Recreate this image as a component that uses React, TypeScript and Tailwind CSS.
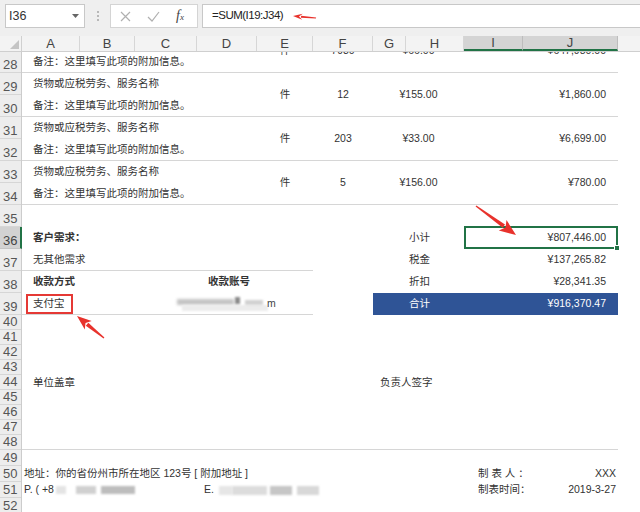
import { ReactNode } from 'react'

const headerCols = [
  { label: 'A', w: 'w-[58px]', sel: false },
  { label: 'B', w: 'w-[55px]', sel: false },
  { label: 'C', w: 'w-[62px]', sel: false },
  { label: 'D', w: 'w-[60px]', sel: false },
  { label: 'E', w: 'w-[56px]', sel: false },
  { label: 'F', w: 'w-[60px]', sel: false },
  { label: 'G', w: 'w-[33px]', sel: false },
  { label: 'H', w: 'w-[58px]', sel: false },
  { label: 'I', w: 'w-[59px]', sel: true },
  { label: 'J', w: 'w-[95px]', sel: true },
]

const rowNums = Array.from({ length: 26 }, (_, i) => 27 + i)

const rowHeight = (n: number) => (n <= 39 ? 'h-[22px]' : n <= 48 ? 'h-[15px]' : 'h-[16px]')

// row 27 sits under the column headings, only the bottom of its numbers shows
const items = [
  { span: 'row-[1/span_2]', top: '', bottom: 'row-start-2', qty: '7930', price: '¥66.00', total: '¥647,980.00' },
  { span: 'row-[3/span_2]', top: 'row-start-3', bottom: 'row-start-4', qty: '12', price: '¥155.00', total: '¥1,860.00' },
  { span: 'row-[5/span_2]', top: 'row-start-5', bottom: 'row-start-6', qty: '203', price: '¥33.00', total: '¥6,699.00' },
  { span: 'row-[7/span_2]', top: 'row-start-7', bottom: 'row-start-8', qty: '5', price: '¥156.00', total: '¥780.00' },
]

function Cell({ className, children }: { className: string; children?: ReactNode }) {
  return <div className={`flex items-center whitespace-nowrap text-[10.5px] text-[#333] ${className}`}>{children}</div>
}

// red callout arrow, drawn from tail (x1,y1) to head (x2,y2)
function Arrow({ x1, y1, x2, y2, w, hl, hw }: { x1: number; y1: number; x2: number; y2: number; w: number; hl: number; hw: number }) {
  const len = Math.hypot(x2 - x1, y2 - y1)
  const ux = (x2 - x1) / len
  const uy = (y2 - y1) / len
  const px = -uy
  const py = ux
  const bx = x2 - ux * hl
  const by = y2 - uy * hl
  const pt = (x: number, y: number) => `${x.toFixed(1)},${y.toFixed(1)}`
  const shaft = [
    pt(x1 + px * 0.6, y1 + py * 0.6),
    pt(bx + (px * w) / 2, by + (py * w) / 2),
    pt(bx - (px * w) / 2, by - (py * w) / 2),
    pt(x1 - px * 0.6, y1 - py * 0.6),
  ].join(' ')
  const head = [
    pt(x2, y2),
    pt(bx + (px * hw) / 2 - ux * 1.5, by + (py * hw) / 2 - uy * 1.5),
    pt(bx + ux * 2, by + uy * 2),
    pt(bx - (px * hw) / 2 - ux * 1.5, by - (py * hw) / 2 - uy * 1.5),
  ].join(' ')
  return (
    <g fill="#e8322c">
      <polygon points={shaft} />
      <polygon points={head} />
    </g>
  )
}

export default function App() {
  return (
    <div className="relative w-[640px] h-[512px] overflow-hidden bg-white font-['Liberation_Sans','Noto_Sans_CJK_SC',sans-serif]">
      {/* formula bar */}
      <div className="h-[36px] bg-[#efefef] flex items-start pt-[4px] pl-[5px]">
        <div className="w-[80px] h-[24px] bg-white border border-[#c8c8c8] flex items-center justify-between pl-[3px] pr-[5px]">
          <span className="text-[12.5px] text-[#333]">I36</span>
          <svg width="7" height="4" viewBox="0 0 7 4">
            <path d="M0 0h7L3.5 4z" fill="#666" />
          </svg>
        </div>
        <div className="w-[25px] h-[24px] flex flex-col items-center justify-center gap-[2px]">
          <span className="w-[2px] h-[2px] bg-[#b8b8b8]" />
          <span className="w-[2px] h-[2px] bg-[#b8b8b8]" />
          <span className="w-[2px] h-[2px] bg-[#b8b8b8]" />
        </div>
        <div className="w-[88px] h-[24px] bg-white border border-[#d4d4d4] flex items-center pl-[9px] gap-[16px]">
          <svg width="11" height="11" viewBox="0 0 11 11">
            <path d="M1 1l9 9M10 1l-9 9" stroke="#b0b0b0" strokeWidth="1.2" />
          </svg>
          <svg width="13" height="11" viewBox="0 0 13 11">
            <path d="M1 6l4 4 7-9" stroke="#b0b0b0" strokeWidth="1.2" fill="none" />
          </svg>
          <span className="font-['Liberation_Serif',serif] italic text-[14px] text-[#444] leading-none">
            f<span className="text-[9px]">x</span>
          </span>
        </div>
        <div className="ml-[4px] flex-1 h-[24px] bg-white border border-r-0 border-[#c8c8c8] flex items-center pl-[9px]">
          <span className="text-[11.5px] tracking-[-0.5px] text-[#222]">=SUM(I19:J34)</span>
        </div>
      </div>

      {/* column headings */}
      <div className="h-[16px] flex bg-[#f3f3f3] border-b border-[#cfcfcf]">
        <div className="w-[22px] shrink-0 border-r border-[#d0d0d0] flex items-end justify-end pr-[2px] pb-[2px]">
          <svg width="9" height="9" viewBox="0 0 9 9">
            <path d="M9 0v9H0z" fill="#c4c4c4" />
          </svg>
        </div>
        {headerCols.map((c) => (
          <div
            key={c.label}
            className={`${c.w} shrink-0 flex items-center justify-center text-[13px] leading-none border-r ${
              c.sel ? 'bg-[#d4d4d4] text-[#444] border-[#bdbdbd] border-b-2 border-b-[#217346]' : 'text-[#444] border-[#d6d6d6]'
            }`}
          >
            {c.label}
          </div>
        ))}
        <div className="flex-1" />
      </div>

      {/* sheet */}
      <div className="h-[460px] overflow-hidden">
        <div className="flex -mt-[23px]">
          <div className="w-[22px] shrink-0 flex flex-col bg-[#ededed] border-r border-[#cccccc]">
            {rowNums.map((n) => (
              <div
                key={n}
                className={`${rowHeight(n)} shrink-0 flex items-end pl-[3px] pb-[1px] text-[13px] leading-none font-['Liberation_Sans_Narrow','Liberation_Sans',sans-serif] ${
                  n === 36 ? 'bg-[#d2d2d2] text-[#444] border-b border-[#c4c4c4] -mr-px border-r-2 border-r-[#217346]' : 'text-[#555] border-b border-[#d6d6d6]'
                }`}
              >
                {n > 27 ? n : ''}
              </div>
            ))}
          </div>

          <div className="flex-1 grid grid-cols-[58px_55px_62px_60px_56px_60px_33px_58px_59px_95px_1fr] grid-rows-[repeat(13,22px)_repeat(9,15px)_repeat(4,16px)]">
            {items.map((it) => (
              <div key={it.qty} className="contents">
                <div className={`${it.span} col-[1/span_10] border-b border-[#d6d6d6]`} />
                {it.top && <Cell className={`${it.top} col-[1/span_4] pl-[11px]`}>货物或应税劳务、服务名称</Cell>}
                <Cell className={`${it.bottom} col-[1/span_4] pl-[11px]`}>备注：这里填写此项的附加信息。</Cell>
                <Cell className={`${it.span} col-start-5 justify-center`}>件</Cell>
                <Cell className={`${it.span} col-start-6 justify-center`}>{it.qty}</Cell>
                <Cell className={`${it.span} col-[7/span_2] justify-center`}>{it.price}</Cell>
                <Cell className={`${it.span} col-[9/span_2] justify-end pr-[12px]`}>{it.total}</Cell>
              </div>
            ))}

            {/* row 36 */}
            <Cell className="row-start-10 col-[1/span_3] pl-[11px] font-bold">客户需求：</Cell>
            <Cell className="row-start-10 col-[7/span_2] pl-[36px]">小计</Cell>
            <div className="row-start-10 col-[9/span_2] relative -mt-px border-2 border-[#217346] flex items-center justify-end pr-[10px] text-[10.5px] text-[#333]">
              ¥807,446.00
              <span className="absolute -right-[4px] -bottom-[4px] w-[6px] h-[6px] bg-[#217346] border border-white" />
            </div>

            {/* row 37 */}
            <Cell className="row-start-11 col-[1/span_5] pl-[11px] border-b border-[#d6d6d6]">无其他需求</Cell>
            <Cell className="row-start-11 col-[7/span_2] pl-[36px]">税金</Cell>
            <Cell className="row-start-11 col-[9/span_2] justify-end pr-[12px]">¥137,265.82</Cell>

            {/* row 38 */}
            <Cell className="row-start-12 col-[1/span_3] pl-[11px] font-bold">收款方式</Cell>
            <Cell className="row-start-12 col-[4/span_2] pl-[11px] font-bold">收款账号</Cell>
            <Cell className="row-start-12 col-[7/span_2] pl-[36px]">折扣</Cell>
            <Cell className="row-start-12 col-[9/span_2] justify-end pr-[12px]">¥28,341.35</Cell>

            {/* row 39 */}
            <div className="row-start-13 col-[1/span_5] border-b border-[#d6d6d6] flex items-center">
              <div className="ml-[4px] w-[47px] h-[20px] border-2 border-[#e53935] flex items-center pl-[5px] text-[10.5px] text-[#333]">
                支付宝
              </div>
              <div className="ml-[104px] relative w-[100px] h-[14px]">
                <span className="absolute left-0 top-[2px] w-[57px] h-[6px] bg-[#c4c4c4] blur-[1.5px]" />
                <span className="absolute left-[5px] top-[8px] w-[86px] h-[6px] bg-[#ececec] blur-[1px]" />
                <span className="absolute left-[58px] top-0 w-[5px] h-[7px] bg-[#8a8a8a] blur-[1px]" />
                <span className="absolute left-[68px] top-[3px] w-[18px] h-[5px] bg-[#d2d2d2] blur-[1px]" />
                <span className="absolute left-[90px] -top-[1px] text-[10.5px] text-[#444]">m</span>
              </div>
            </div>
            <div className="row-start-13 col-[7/span_4] bg-[#2f5496] flex items-center justify-between pl-[36px] pr-[12px] text-[10.5px] text-white">
              <span>合计</span>
              <span>¥916,370.47</span>
            </div>

            {/* row 44 */}
            <Cell className="row-start-18 col-[1/span_3] pl-[11px]">单位盖章</Cell>
            <Cell className="row-start-18 col-[7/span_3] pl-[7px]">负责人签字</Cell>

            {/* row 48 */}
            <div className="row-start-22 col-[1/span_10] border-b border-[#d6d6d6]" />

            {/* row 50 */}
            <Cell className="row-start-24 col-[1/span_6] pl-[2px]">地址：你的省份州市所在地区 123号 [ 附加地址 ]</Cell>
            <Cell className="row-start-24 col-start-9 pl-[14px]">制 表 人 ：</Cell>
            <Cell className="row-start-24 col-start-10 justify-end pr-[2px]">XXX</Cell>

            {/* row 51 */}
            <Cell className="row-start-25 col-[1/span_3] pl-[2px]">
              <span>P. ( +8</span>
              <span className="ml-[2px] w-[10px] h-[8px] bg-[#e4e4e4] blur-[1px]" />
              <span className="ml-[10px] w-[20px] h-[8px] bg-[#d0d0d0] blur-[1px]" />
              <span className="ml-[5px] w-[34px] h-[8px] bg-[#bdbdbd] blur-[1px]" />
            </Cell>
            <Cell className="row-start-25 col-[4/span_3] pl-[7px]">
              <span>E.</span>
              <span className="ml-[5px] w-[13px] h-[9px] bg-[#e6e6e6] blur-[1px]" />
              <span className="w-[35px] h-[9px] bg-[#dcdcdc] blur-[1px]" />
              <span className="ml-[3px] w-[22px] h-[9px] bg-[#c6c6c6] blur-[1px]" />
              <span className="ml-[5px] w-[22px] h-[9px] bg-[#d8d8d8] blur-[1px]" />
            </Cell>
            <Cell className="row-start-25 col-start-9 pl-[14px]">制表时间：</Cell>
            <Cell className="row-start-25 col-start-10 justify-end pr-[2px]">2019-3-27</Cell>
          </div>
        </div>
      </div>

      {/* callout arrows */}
      <svg className="absolute inset-0 pointer-events-none" width="640" height="512" viewBox="0 0 640 512">
        <Arrow x1={316} y1={18} x2={293} y2={16} w={2} hl={8} hw={6} />
        <Arrow x1={476} y1={206} x2={516} y2={235} w={4} hl={15} hw={13} />
        <Arrow x1={104} y1={338} x2={77} y2={316} w={4} hl={13} hw={11} />
      </svg>
    </div>
  )
}
